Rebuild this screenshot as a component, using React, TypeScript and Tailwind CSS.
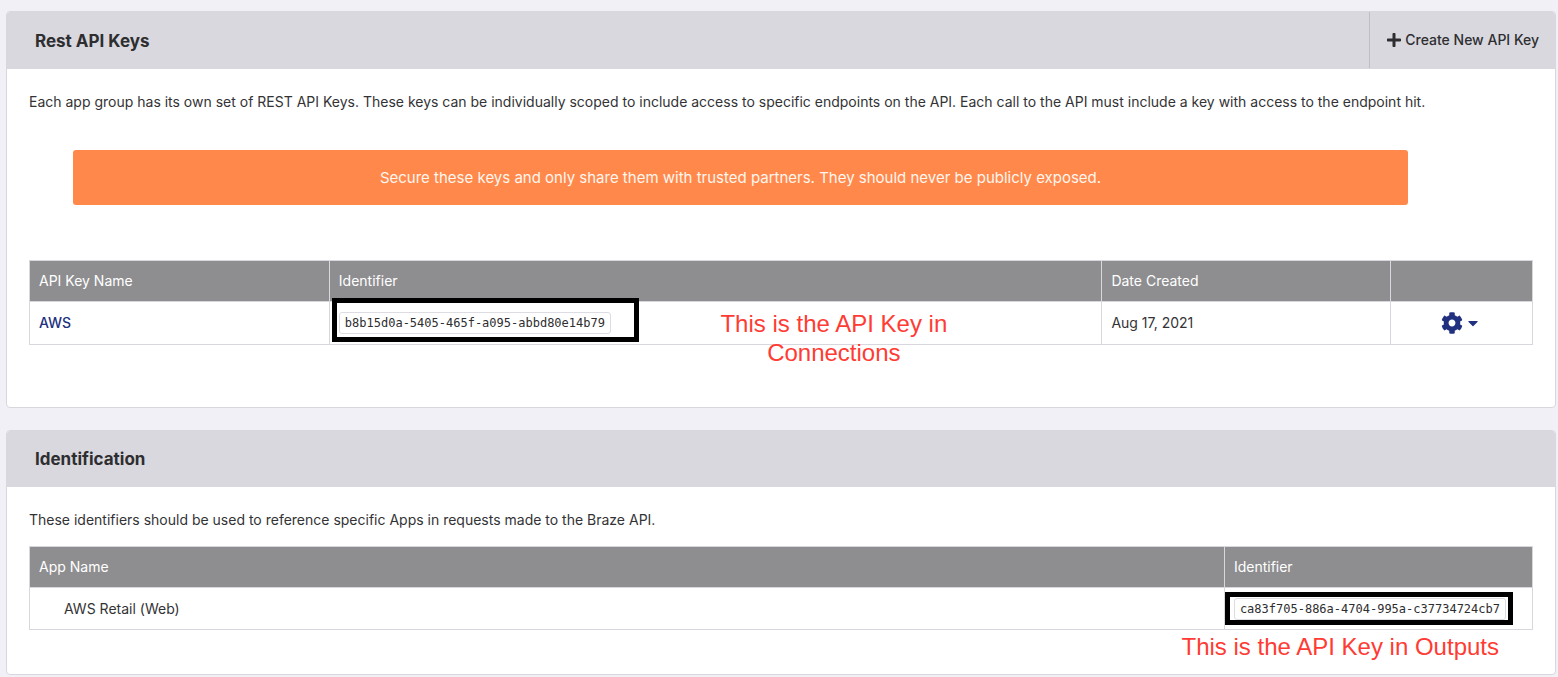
import type { ReactNode } from "react";
import { FaCog, FaCaretDown, FaPlus } from "react-icons/fa";

function Panel({ title, action, children }: { title: string; action?: ReactNode; children: ReactNode }) {
  return (
    <section className="overflow-hidden rounded-sm border border-[#d8d7de] bg-white">
      <header className="flex min-h-14 items-stretch justify-between bg-[#d9d8df]">
        <h2 className="flex items-center pl-7 text-[17px] leading-6 font-bold text-[#2e2e30]">{title}</h2>
        {action}
      </header>
      {children}
    </section>
  );
}

function HeadCell({ className = "", children }: { className?: string; children?: ReactNode }) {
  return (
    <th className={`border border-[#d8d7de] px-[9px] text-left font-normal text-white ${className}`}>
      {children}
    </th>
  );
}

function KeyChip({ value }: { value: string }) {
  return (
    <code className="inline-block rounded-[3px] border border-[#dddce3] bg-white px-[5px] align-middle font-['DejaVu_Sans_Mono',monospace] text-xs leading-5 text-[#2e2e30]">
      {value}
    </code>
  );
}

export default function App() {
  return (
    <main className="flex flex-col gap-[22px] bg-[#f1f0f6] pt-[11px] pr-[2px] pb-[2px] pl-[6px] font-[Inter,sans-serif] text-sm text-[#333335]">
      <Panel
        title="Rest API Keys"
        action={
          <button
            type="button"
            className="mb-px flex h-14 items-center gap-[3px] border-l border-[#bfbec6] px-4 text-sm font-medium text-[#2e2e30]"
          >
            <FaPlus className="size-4" aria-hidden="true" />
            Create New API Key
          </button>
        }
      >
        <div className="px-[22px] pt-[23px] pb-[62px]">
          <p className="leading-5">
            Each app group has its own set of REST API Keys. These keys can be individually scoped to include access to
            specific endpoints on the API. Each call to the API must include a key with access to the endpoint hit.
          </p>
          <div className="mt-[38px] mr-[125px] ml-11 flex h-[55px] items-center justify-center rounded-[3px] bg-[#ff884a] text-[15px] text-[#fff6ef]">
            Secure these keys and only share them with trusted partners. They should never be publicly exposed.
          </div>
          <table className="mt-[55px] w-full table-fixed border-collapse">
            <thead>
              <tr className="h-[41px] bg-[#8e8e90]">
                <HeadCell className="w-[19.95%]">API Key Name</HeadCell>
                <HeadCell>Identifier</HeadCell>
                <HeadCell className="w-[19.2%]">Date Created</HeadCell>
                <HeadCell className="w-[9.45%]" />
              </tr>
            </thead>
            <tbody>
              <tr className="h-[43px]">
                <td className="border border-[#d8d7de] px-[9px]">
                  <a href="#aws" className="font-medium text-[#21317f]">
                    AWS
                  </a>
                </td>
                <td className="relative border border-[#d8d7de] px-[9px]">
                  <div className="absolute -top-1 left-[2px] h-11 w-[307px] border-[5px] border-black bg-white" />
                  <div className="relative">
                    <KeyChip value="b8b15d0a-5405-465f-a095-abbd80e14b79" />
                  </div>
                  <p className="absolute top-[7px] left-[376px] w-64 text-center font-['Liberation_Sans',sans-serif] text-2xl leading-[29px] text-[#ff3b34]">
                    This is the API Key in Connections
                  </p>
                </td>
                <td className="border border-[#d8d7de] px-[9px]">Aug 17, 2021</td>
                <td className="border border-[#d8d7de] px-[9px]">
                  <button type="button" aria-label="Key settings" className="mx-auto flex items-center gap-[2px] text-[#21317f]">
                    <FaCog className="size-[22px]" />
                    <FaCaretDown className="size-4" />
                  </button>
                </td>
              </tr>
            </tbody>
          </table>
        </div>
      </Panel>

      <Panel title="Identification">
        <div className="px-[22px] pt-[23px] pb-11">
          <p className="leading-5">These identifiers should be used to reference specific Apps in requests made to the Braze API.</p>
          <table className="mt-4 w-full table-fixed border-collapse">
            <thead>
              <tr className="h-[41px] bg-[#8e8e90]">
                <HeadCell>App Name</HeadCell>
                <HeadCell className="w-[20.5%]">Identifier</HeadCell>
              </tr>
            </thead>
            <tbody>
              <tr className="h-[42px]">
                <td className="border border-[#d8d7de] pl-[34px]">AWS Retail (Web)</td>
                <td className="relative border border-[#d8d7de] px-[9px]">
                  <div className="absolute top-1 left-0 h-[33px] w-[288px] border-[5px] border-black bg-white" />
                  <div className="relative">
                    <KeyChip value="ca83f705-886a-4704-995a-c37734724cb7" />
                  </div>
                  <p className="absolute top-11 right-[33px] font-['Liberation_Sans',sans-serif] text-2xl leading-[29px] whitespace-nowrap text-[#ff3b34]">
                    This is the API Key in Outputs
                  </p>
                </td>
              </tr>
            </tbody>
          </table>
        </div>
      </Panel>
    </main>
  );
}
